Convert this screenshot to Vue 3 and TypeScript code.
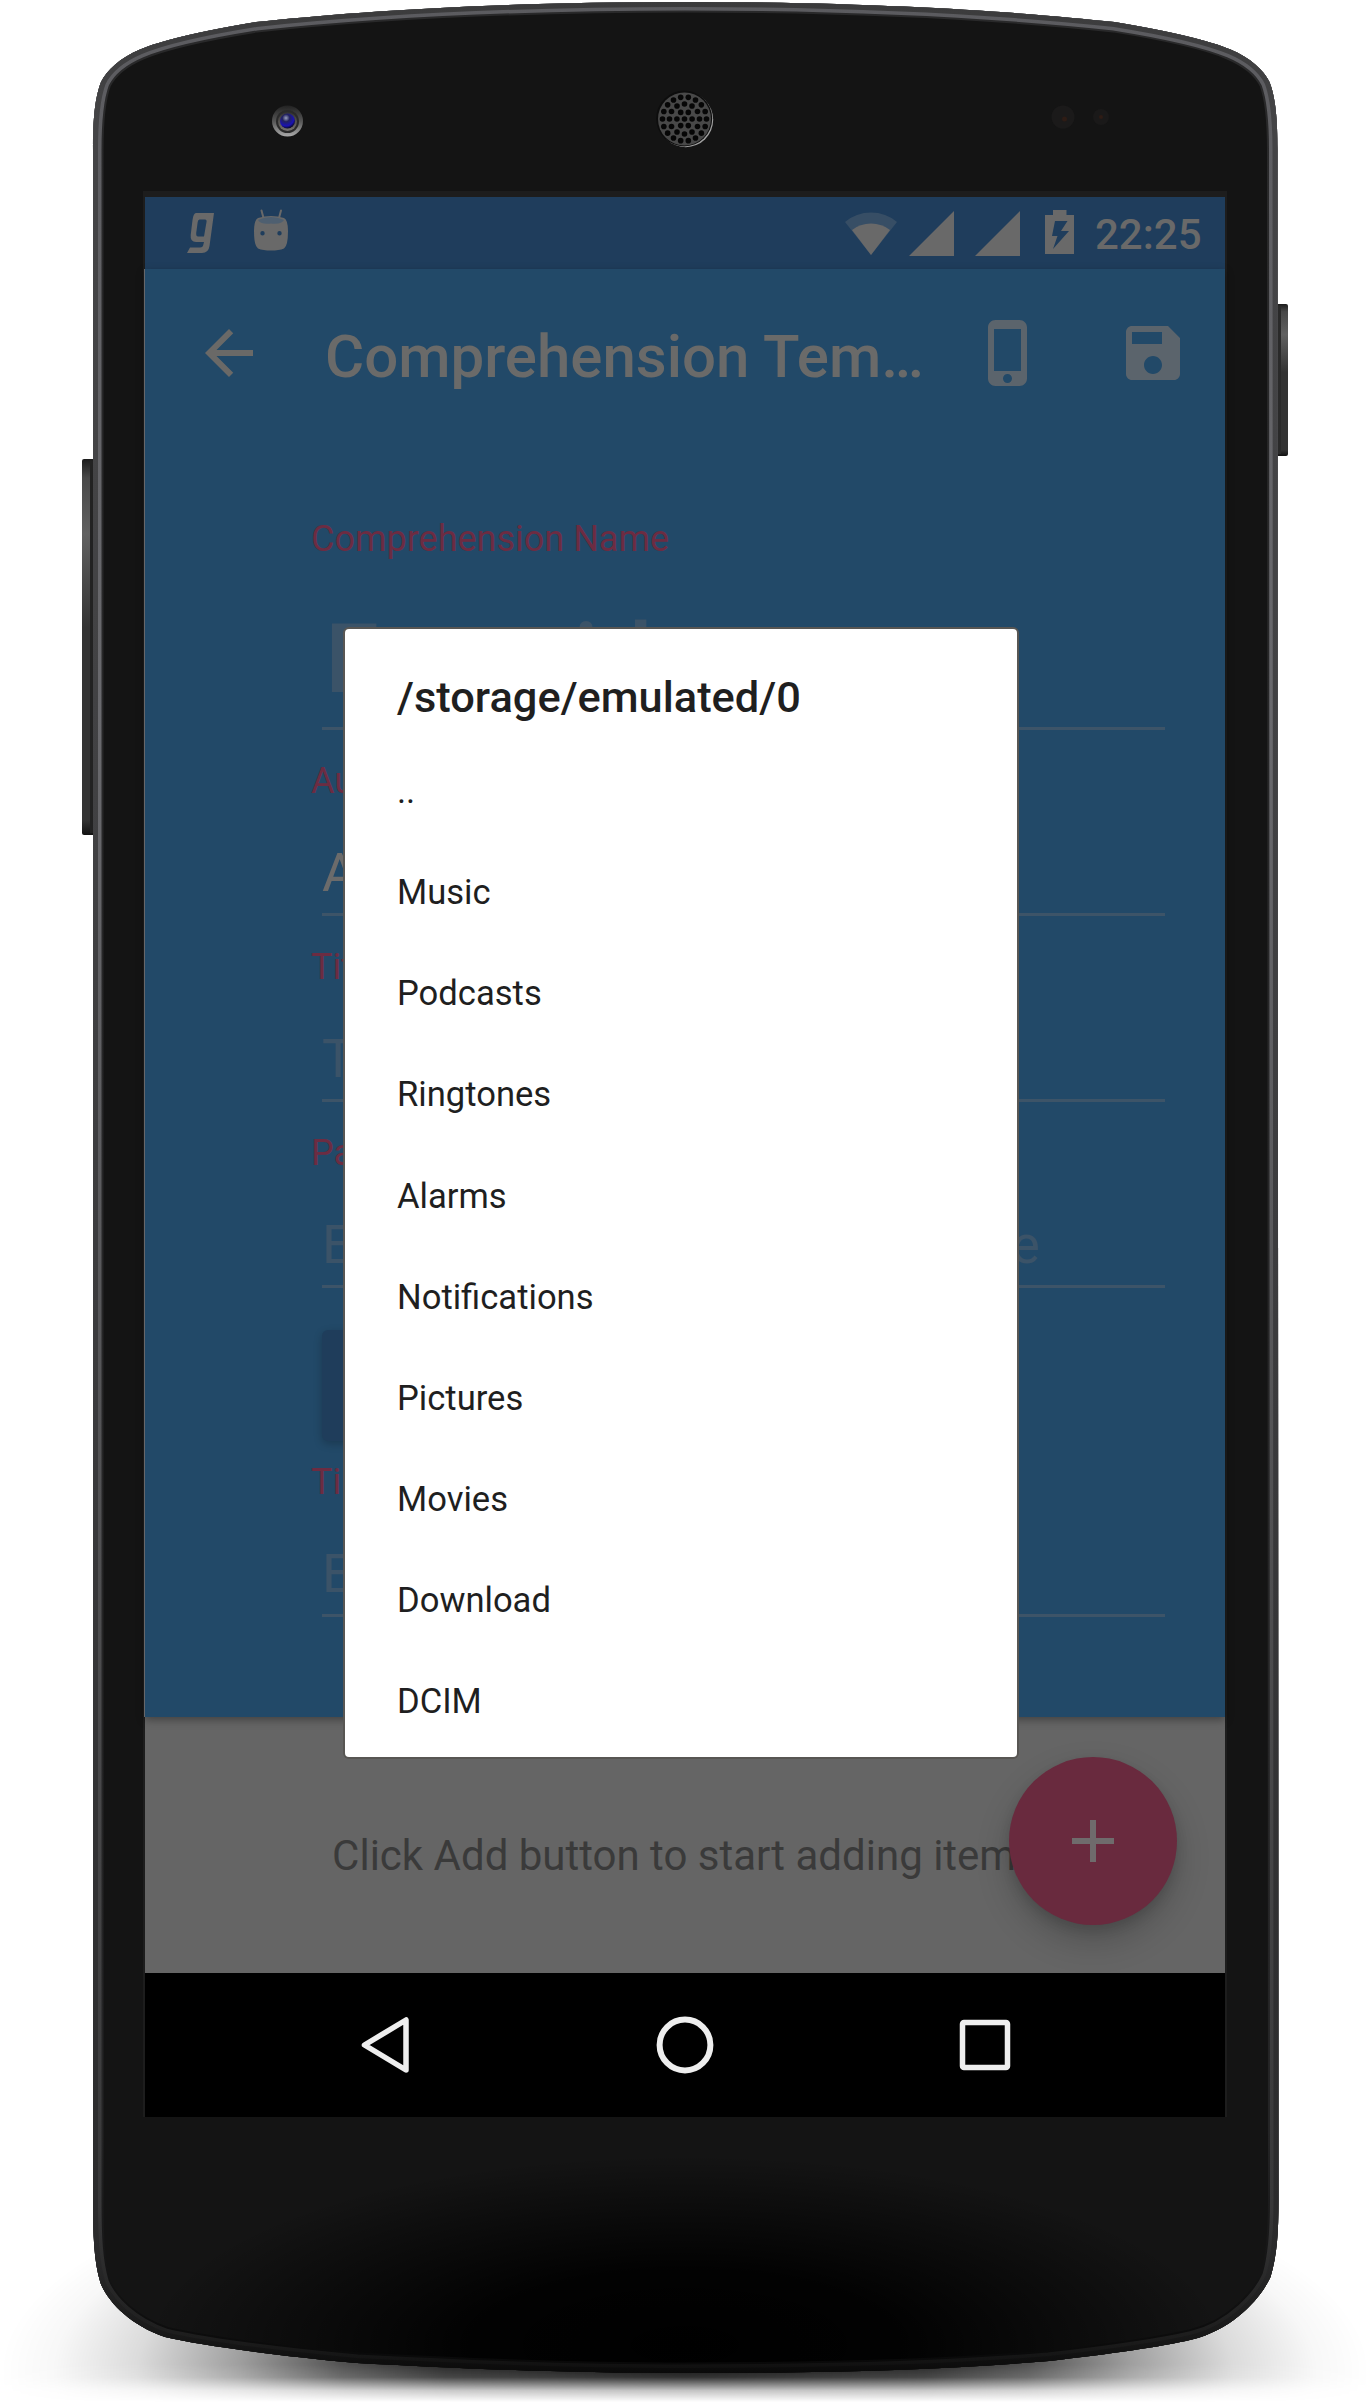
<script setup lang="ts">
interface Field {
  label: string
  text: string
  kind: string
}

const folders: string[] = ['..', 'Music', 'Podcasts', 'Ringtones', 'Alarms', 'Notifications', 'Pictures', 'Movies', 'Download', 'DCIM']

const fields: Field[] = [
  { label: 'Comprehension Name', text: 'Enter id', kind: 'headline' },
  { label: 'Author Name', text: 'Author', kind: 'filled' },
  { label: 'Title', text: 'Title', kind: 'hint' },
  { label: 'Passage', text: 'Enter passage in a space here', kind: 'hint wide' },
]

// Concentric rings of the earpiece grille
const holes = [[0, 1], [7.6, 6], [15, 12], [22, 18]].flatMap(([r, n]) =>
  Array.from({ length: n }, (_, i) => {
    const a = (i / n) * Math.PI * 2
    return { x: 684.5 + r * Math.cos(a), y: 119 + r * Math.sin(a) }
  }),
)
</script>

<template>
  <div class="stage">
    <svg class="device" width="1370" height="2405" viewBox="0 0 1370 2405">
      <defs>
        <path
          id="shell"
          d="M93 150C93 118 95 98 101 82C107 70 120 58 140 49.500C160 41 200 31 256 22C340 13 480 2 685 2C890 2 1030 13 1114.500 22C1170.500 31 1210.500 41 1230.500 49.500C1250.500 58 1263.500 70 1269.500 82C1275.500 98 1277.500 118 1277.500 150L1278.500 2200C1278.500 2232 1277 2256 1270.500 2277C1262 2296 1235 2329 1192 2339.500C1160 2347 1110 2354 1049 2361C940 2370 820 2373 685 2373C560 2373 450 2368 357 2363C270 2355 200 2345 165 2337C130 2325 108 2302 100.500 2283C94 2262 93 2235 93 2200Z"
        />
        <clipPath id="shellClip"><use href="#shell" /></clipPath>
        <radialGradient id="shadow" cx="0.5" cy="0.5" r="0.5">
          <stop offset="0" stop-color="#000" stop-opacity="0.95" />
          <stop offset="0.35" stop-color="#000" stop-opacity="0.85" />
          <stop offset="0.5" stop-color="#000" stop-opacity="0.68" />
          <stop offset="0.65" stop-color="#000" stop-opacity="0.38" />
          <stop offset="0.8" stop-color="#000" stop-opacity="0.14" />
          <stop offset="0.92" stop-color="#000" stop-opacity="0.03" />
          <stop offset="1" stop-color="#000" stop-opacity="0" />
        </radialGradient>
        <linearGradient id="fade" x1="0" y1="2364" x2="0" y2="2402" gradientUnits="userSpaceOnUse">
          <stop offset="0" stop-color="#fff" />
          <stop offset="0.35" stop-color="#fff" stop-opacity="0.85" />
          <stop offset="0.7" stop-color="#fff" stop-opacity="0.25" />
          <stop offset="1" stop-color="#fff" stop-opacity="0" />
        </linearGradient>
        <mask id="floor" maskUnits="userSpaceOnUse" x="0" y="2000" width="1370" height="405">
          <rect x="0" y="2000" width="1370" height="405" fill="url(#fade)" />
        </mask>
        <linearGradient id="rim" x1="0" y1="0" x2="0" y2="1">
          <stop offset="0" stop-color="#3b3b3c" />
          <stop offset="0.05" stop-color="#444446" />
          <stop offset="0.25" stop-color="#434345" />
          <stop offset="0.6" stop-color="#3a3a3c" />
          <stop offset="0.95" stop-color="#2a2a2b" />
          <stop offset="0.985" stop-color="#181818" />
          <stop offset="1" stop-color="#0a0a0a" />
        </linearGradient>
        <linearGradient id="rimLight" x1="0" y1="0" x2="0" y2="1">
          <stop offset="0" stop-color="#5b5b5f" />
          <stop offset="0.3" stop-color="#6a6a6e" />
          <stop offset="0.65" stop-color="#505052" />
          <stop offset="0.93" stop-color="#383839" />
          <stop offset="0.985" stop-color="#1d1d1d" />
          <stop offset="1" stop-color="#0e0e0e" />
        </linearGradient>
        <linearGradient id="rimInner" x1="0" y1="0" x2="0" y2="1">
          <stop offset="0" stop-color="#29292a" />
          <stop offset="0.9" stop-color="#242425" />
          <stop offset="1" stop-color="#080808" />
        </linearGradient>
        <radialGradient id="pool" cx="0" cy="0" r="1" gradientUnits="userSpaceOnUse" gradientTransform="translate(685 2345) scale(540 190)">
          <stop offset="0" stop-color="#000" />
          <stop offset="0.4" stop-color="#000" stop-opacity="0.9" />
          <stop offset="1" stop-color="#000" stop-opacity="0" />
        </radialGradient>
        <linearGradient id="key" x1="0" y1="0" x2="0" y2="1">
          <stop offset="0" stop-color="#1c1c1c" />
          <stop offset="0.05" stop-color="#484848" />
          <stop offset="0.2" stop-color="#606060" />
          <stop offset="0.45" stop-color="#333" />
          <stop offset="0.96" stop-color="#333" />
          <stop offset="1" stop-color="#111" />
        </linearGradient>
        <linearGradient id="lens" x1="0" y1="0" x2="0" y2="1">
          <stop offset="0" stop-color="#222" />
          <stop offset="0.5" stop-color="#555" />
          <stop offset="1" stop-color="#aaa" />
        </linearGradient>
        <linearGradient id="bezel" x1="0" y1="0" x2="0" y2="1">
          <stop offset="0" stop-color="#303030" />
          <stop offset="1" stop-color="#77726f" />
        </linearGradient>
        <radialGradient id="glass" cx="0.4" cy="0.3" r="0.7">
          <stop offset="0" stop-color="#9aa0bd" />
          <stop offset="0.35" stop-color="#22225e" />
          <stop offset="0.75" stop-color="#1a12b4" />
          <stop offset="1" stop-color="#0a0a28" />
        </radialGradient>
      </defs>

      <ellipse cx="685" cy="2372" rx="685" ry="235" fill="url(#shadow)" mask="url(#floor)" />

      <rect x="82" y="459" width="13" height="376" rx="2" fill="url(#key)" />
      <rect x="90" y="461" width="3" height="372" fill="#222" />
      <rect x="1276" y="304" width="12" height="152" rx="2" fill="url(#key)" />
      <rect x="1278" y="306" width="3" height="148" fill="#2a2a2a" />

      <use href="#shell" fill="#141414" />
      <rect x="90" y="2140" width="1190" height="240" fill="url(#pool)" clip-path="url(#shellClip)" />
      <g clip-path="url(#shellClip)" fill="none">
        <use href="#shell" stroke="url(#rimInner)" stroke-width="21" />
        <use href="#shell" stroke="url(#rimLight)" stroke-width="17" />
        <use href="#shell" stroke="url(#rim)" stroke-width="10" />
      </g>

      <circle cx="287.500" cy="121" r="15.500" fill="url(#lens)" />
      <circle cx="287.500" cy="121.500" r="11.500" fill="#2a2a2a" />
      <circle cx="287.500" cy="121.500" r="9.500" fill="url(#bezel)" />
      <circle cx="287.500" cy="121" r="7.500" fill="url(#glass)" />

      <circle cx="685.700" cy="119.700" r="27.500" fill="#a0a0a0" />
      <circle cx="684.200" cy="118.500" r="28" fill="#0d0d0d" />
      <circle cx="684.500" cy="119" r="26.500" fill="#484848" />
      <circle v-for="(h, i) in holes" :key="i" :cx="h.x" :cy="h.y" r="2.800" fill="#060606" />

      <circle cx="1063" cy="117" r="11.500" fill="#1b1a1a" />
      <circle cx="1064.500" cy="119" r="2.500" fill="#2e1c15" />
      <circle cx="1101" cy="117" r="8" fill="#1a1919" />
      <circle cx="1101" cy="117" r="2" fill="#2e1c15" />

      <rect x="143" y="191" width="1084" height="1926" fill="#1d1d1d" />
    </svg>

    <div class="screen">
      <div class="statusbar">
        <svg width="27" height="40" viewBox="0 0 27 40" class="g">
          <path fill="#696969" fill-rule="evenodd" d="M9 0H27L22.500 33Q21.500 40 15 40H0L3 34.500H13Q16 34.500 16.500 31L17 29H9Q3 29 3.700 22L5.500 7Q6.500 0 9 0ZM12.500 6.500Q11 6.500 10.700 9L9.200 20Q9 23.500 11 23.500H17L19.500 9Q20 6.500 18 6.500Z" />
        </svg>
        <svg width="34" height="42" viewBox="0 0 34 42" class="droid">
          <path d="M7.500 1.500L9.500 9M27 1.500L25 9" stroke="#696969" stroke-width="2" stroke-linecap="round" />
          <path fill="#696969" fill-rule="evenodd" d="M4 9Q17 5 30 9Q34 11 34 22Q34 37 30 39.500Q25 41.500 17 41.500Q9 41.500 4 39.500Q0 37 0 22Q0 11 4 9ZM8.500 22a2.200 2.200 0 1 0 0.010 4.400a2.200 2.200 0 1 0-0.010-4.400ZM25.500 22a2.200 2.200 0 1 0 0.010 4.400a2.200 2.200 0 1 0-0.010-4.400Z" />
          <path fill="#4e5f70" d="M4 11Q17 5 30 11Q28 15.500 17 14.500Q6 15.500 4 11Z" />
        </svg>
        <span class="grow" />
        <svg width="52" height="43" viewBox="0 0 52 43" class="wifi">
          <path fill="#374e65" d="M26 43L0 10Q11 0.500 26 0.500Q41 0.500 52 10Z" />
          <path fill="#696969" d="M26 43L7 18Q15 11.500 26 11.500Q37 11.500 45 18Z" />
        </svg>
        <svg width="45" height="45" class="signal"><path fill="#696969" d="M45 0V45H0Z" /></svg>
        <svg width="45" height="45" class="signal2"><path fill="#696969" d="M45 0V45H0Z" /></svg>
        <svg width="29" height="44" viewBox="0 0 29 44" class="battery">
          <path fill="#696969" fill-rule="evenodd" d="M8 0H21.500V5H29V44H0V5H8ZM10 11L7 26H12.500L8 39L24 21H16L22.500 11Z" />
        </svg>
        <span class="clock">22:25</span>
      </div>

      <div class="form">
        <div class="toolbar">
          <svg width="72" height="72" viewBox="0 0 24 24"><path fill="#6a6967" d="M20 11H7.830l5.590-5.590L12 4l-8 8 8 8 1.410-1.410L7.830 13H20v-2z" /></svg>
          <span class="title">Comprehension Tem…</span>
          <svg width="72" height="72" viewBox="0 0 24 24"><path fill="#5b646c" d="M15.500 1h-8C6.120 1 5 2.120 5 3.500v17C5 21.880 6.120 23 7.500 23h8c1.380 0 2.500-1.120 2.500-2.500v-17C18 2.120 16.880 1 15.500 1zm-4 21c-.83 0-1.500-.67-1.500-1.500s.67-1.500 1.500-1.500 1.500.67 1.500 1.500-.67 1.500-1.500 1.500zm4.500-4H7V4h9v14z" /></svg>
          <svg class="save" width="72" height="72" viewBox="0 0 24 24"><path fill="#5b646c" d="M17 3H5c-1.110 0-2 .9-2 2v14c0 1.100.89 2 2 2h14c1.100 0 2-.9 2-2V7l-4-4zm-5 16c-1.660 0-3-1.340-3-3s1.340-3 3-3 3 1.340 3 3-1.340 3-3 3zm3-10H5V5h10v4z" /></svg>
        </div>
        <div v-for="f in fields" :key="f.label" class="field" :class="f.kind">
          <label>{{ f.label }}</label>
          <div class="input">{{ f.text }}</div>
        </div>
        <div class="upload" />
        <div class="field hint timer">
          <label>Timer</label>
          <div class="input">Enter time</div>
        </div>
      </div>

      <div class="list">
        <span>Click Add button to start adding items</span>
        <div class="fab">
          <svg width="42" height="42"><path d="M21 0V42M0 21H42" stroke="#6f6b6c" stroke-width="6" /></svg>
        </div>
      </div>

      <div class="navbar">
        <svg width="60" height="60" viewBox="0 0 60 60"><path d="M51 5V55L9.500 30Z" fill="none" stroke="#eee" stroke-width="5.500" stroke-linejoin="round" /></svg>
        <svg width="60" height="60" viewBox="0 0 60 60"><circle cx="30" cy="30" r="25.400" fill="none" stroke="#eee" stroke-width="6" /></svg>
        <svg width="60" height="60" viewBox="0 0 60 60"><rect x="7.500" y="7.500" width="45" height="45" rx="1.500" fill="none" stroke="#eee" stroke-width="5.500" /></svg>
      </div>

      <div class="overlay">
        <div class="dialog">
          <h2>/storage/emulated/0</h2>
          <ul>
            <li v-for="name in folders" :key="name">{{ name }}</li>
          </ul>
        </div>
      </div>
    </div>
  </div>
</template>

<style>
body {
  margin: 0;
  background: #fff;
}
</style>

<style scoped>
.stage {
  position: relative;
  box-sizing: border-box;
  width: 1370px;
  height: 2405px;
  padding: 197px 145px 0;
  overflow: hidden;
  background: #fff;
  font-family: Roboto, 'Liberation Sans', sans-serif;
}
svg {
  display: block;
  flex: none;
}
.device {
  position: absolute;
  left: 0;
  top: 0;
}
.screen {
  position: relative;
  width: 1080px;
  height: 1920px;
  display: flex;
  flex-direction: column;
}
.statusbar {
  height: 72px;
  display: flex;
  align-items: flex-start;
  background: #1f3d5c;
  box-sizing: border-box;
  padding: 0 22px 0 42px;
}
.grow {
  flex: 1;
}
.g {
  margin: 16px 40px 0 0;
}
.droid {
  margin-top: 12px;
}
.wifi {
  margin: 15px 12px 0 0;
}
.signal {
  margin: 14px 21px 0 0;
}
.signal2 {
  margin: 14px 25px 0 0;
}
.battery {
  margin: 13px 21px 0 0;
}
.clock {
  color: #696969;
  font-size: 42px;
  font-weight: 500;
  line-height: 50px;
  margin-top: 13px;
  width: 108px;
  white-space: nowrap;
}
.form {
  position: relative;
  z-index: 1;
  height: 1448px;
  background: #224968;
  box-shadow: -1px 0 0 #66676a, 0 3px 8px rgba(0, 0, 0, 0.35);
}
.toolbar {
  height: 168px;
  display: flex;
  align-items: center;
  padding: 0 36px 0 48px;
}
.title {
  flex: 1;
  margin-left: 60px;
  padding-top: 6px;
  font-size: 60px;
  font-weight: 500;
  color: #6a6a69;
  white-space: nowrap;
}
.save {
  margin-left: 72px;
}
.field {
  padding: 0 60px 0 166px;
  height: 186px;
  box-sizing: border-box;
}
.field label {
  display: block;
  height: 42px;
  line-height: 42px;
  font-size: 36px;
  color: #6c2c42;
}
.field .input {
  box-sizing: border-box;
  margin-left: 11px;
  width: 843px;
  height: 114px;
  font-size: 54px;
  line-height: 64px;
  padding-top: 39px;
  overflow: hidden;
  white-space: nowrap;
  border-bottom: 3px solid #3d5468;
  color: #3b5368;
}
.headline {
  margin-top: 81px;
  height: 242px;
}
.headline .input {
  height: 170px;
  font-size: 96px;
  font-weight: 500;
  line-height: 112px;
  padding: 43px 0 0 3px;
}
.filled .input {
  color: #6b6b6b;
}
.wide .input {
  padding-right: 125px;
  text-align: justify;
  text-align-last: justify;
}
.upload {
  width: 520px;
  height: 111px;
  margin: 12px 0 20px 177px;
  background: #1f3d5b;
  border-radius: 6px;
  box-shadow: 0 3px 8px rgba(0, 0, 0, 0.22);
}
.list {
  height: 256px;
  background: #656565;
  display: flex;
  justify-content: center;
  position: relative;
}
.list span {
  margin-top: 114px;
  font-size: 42px;
  line-height: 50px;
  color: #3a3a3a;
  white-space: nowrap;
}
.fab {
  position: absolute;
  left: 864px;
  top: 40px;
  width: 168px;
  height: 168px;
  border-radius: 50%;
  background: #692a3e;
  display: flex;
  align-items: center;
  justify-content: center;
  box-shadow: 0 16px 34px rgba(0, 0, 0, 0.2), 0 6px 12px rgba(0, 0, 0, 0.12);
}
.navbar {
  height: 144px;
  background: #000;
  display: flex;
  justify-content: center;
  align-items: center;
  gap: 240px;
}
.overlay {
  position: absolute;
  z-index: 2;
  inset: 0;
  display: flex;
  justify-content: center;
  align-items: flex-start;
}
.dialog {
  box-sizing: border-box;
  margin-top: 432px;
  margin-right: 8px;
  width: 672px;
  height: 1128px;
  background: #fff;
  border-radius: 4px;
  box-shadow: 0 0 0 2px #585653;
  padding: 43px 52px 0;
  color: #1f1f1f;
}
h2 {
  margin: 0;
  height: 69px;
  font-size: 43.4px;
  font-weight: 500;
  line-height: 52px;
  white-space: nowrap;
}
ul {
  margin: 0;
  padding: 0;
  list-style: none;
}
li {
  height: 101.15px;
  line-height: 101px;
  font-size: 34.6px;
}
</style>
